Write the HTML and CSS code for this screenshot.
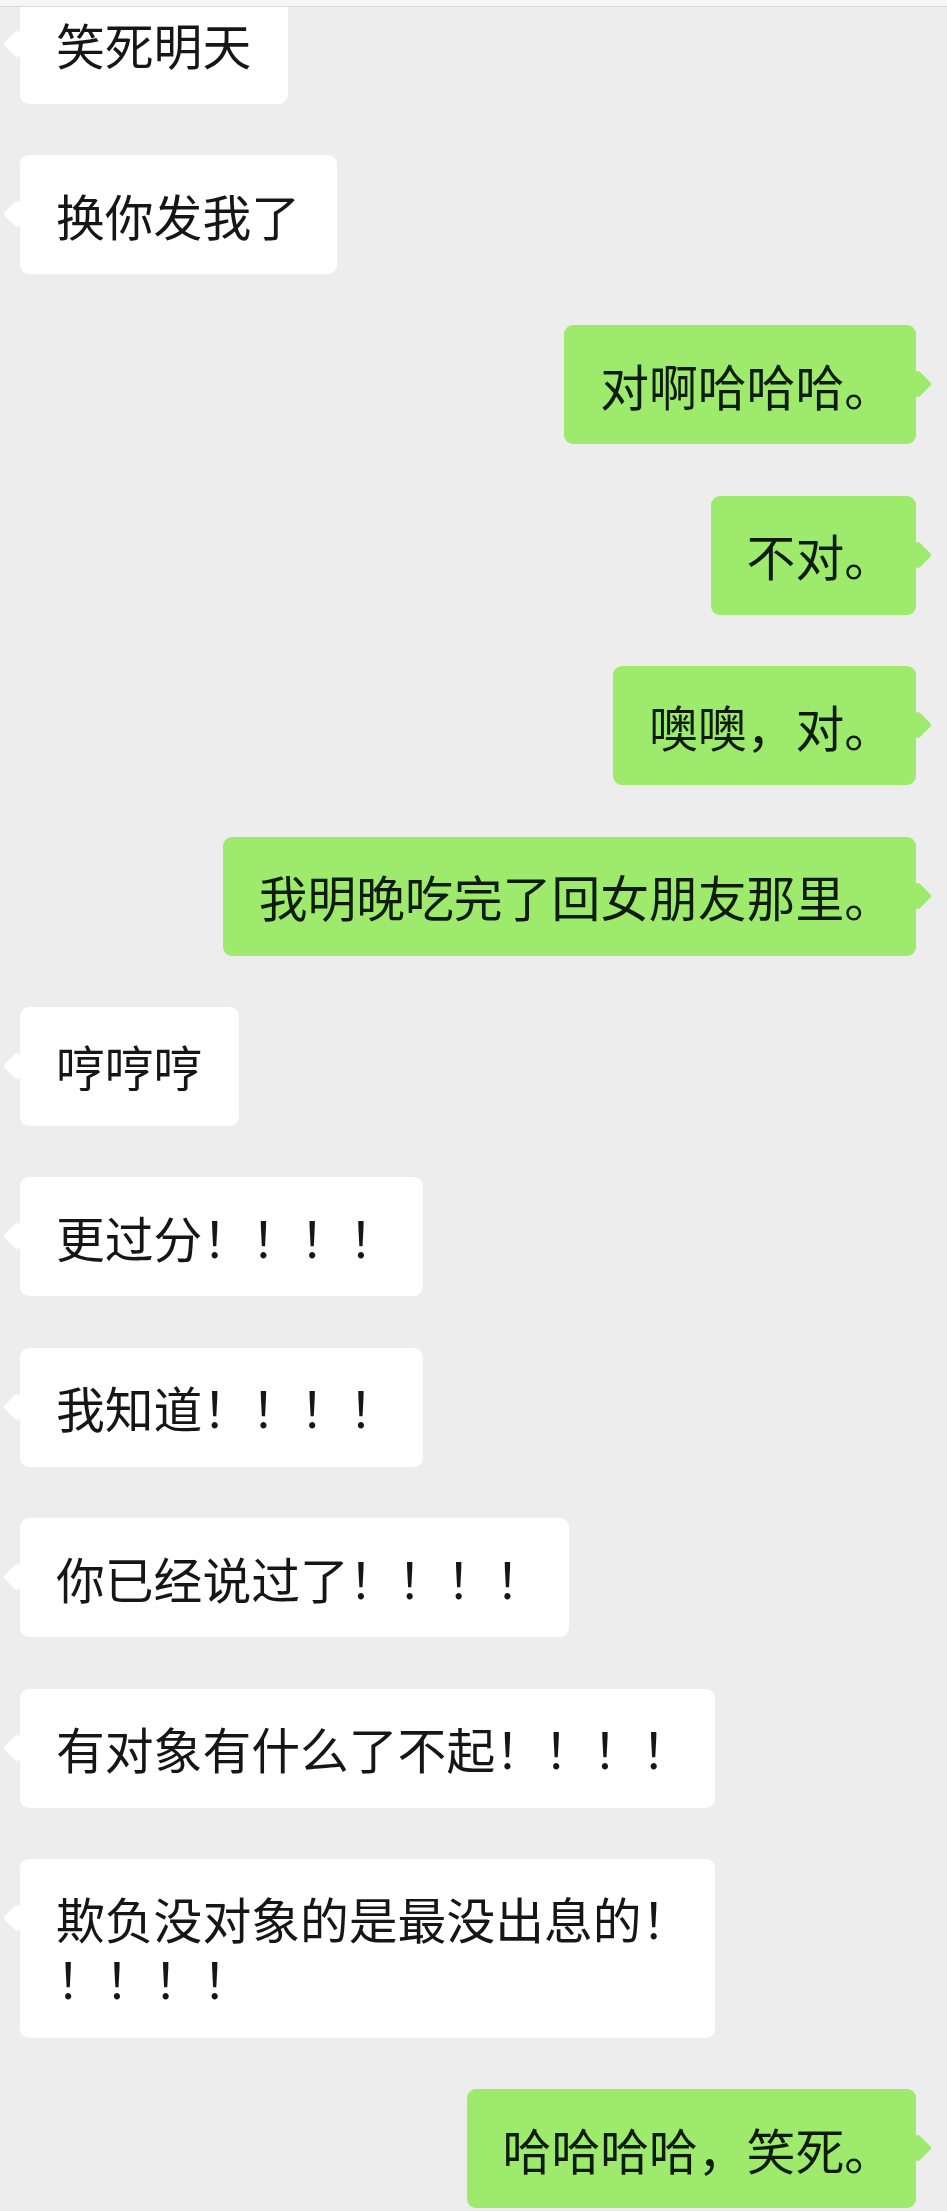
FILE: index.html
```html
<!DOCTYPE html>
<html lang="zh-CN">
<head>
    <meta charset="UTF-8">
    <meta name="viewport" content="width=device-width, initial-scale=1.0">
    <title>聊天记录</title>
    <link rel="stylesheet" href="styles.css">
</head>
<body>
    <div class="topbar"></div>

    <!-- Сообщения чата -->
    <div class="chat">
        <div class="bubble in">笑死明天</div>
        <div class="bubble in">换你发我了</div>
        <div class="bubble out">对啊哈哈哈。</div>
        <div class="bubble out">不对。</div>
        <div class="bubble out">噢噢，对。</div>
        <div class="bubble out">我明晚吃完了回女朋友那里。</div>
        <div class="bubble in">哼哼哼</div>
        <div class="bubble in trim">更过分！！！！</div>
        <div class="bubble in trim">我知道！！！！</div>
        <div class="bubble in trim">你已经说过了！！！！</div>
        <div class="bubble in trim">有对象有什么了不起！！！！</div>
        <div class="bubble in trim">欺负没对象的是最没出息的！<br>！！！！</div>
        <div class="bubble out">哈哈哈哈，笑死。</div>
    </div>
</body>
</html>
```

FILE: styles.css
```css
body {
    font-family: "Noto Sans CJK SC", "Noto Sans", sans-serif;
    background-color: #ededed;
    color: #161616;
    margin: 0;
    padding: 0;
    height: 2211px;
    overflow: hidden;
}

.topbar {
    position: relative;
    z-index: 2;
    height: 6px;
    background-color: #f6f6f6;
    border-bottom: 1px solid #d9d9d9;
}

.chat {
    display: flex;
    flex-direction: column;
    gap: 51.4px;
    margin-top: -22.4px;
    padding: 0 31px 0 20px;
}

.bubble {
    position: relative;
    font-size: 48.8px;
    line-height: 60px;
    padding: 29.5px 37px 29.5px 36px;
    border-radius: 9px;
    white-space: nowrap;
}

/* хвостик пузыря */
.bubble::before {
    content: "";
    position: absolute;
    top: 49px;
    width: 20px;
    height: 20px;
    border-radius: 3px;
    transform: rotate(45deg);
}

.bubble.in {
    align-self: flex-start;
    background-color: #ffffff;
}

.bubble.in::before {
    left: -13px;
    background-color: #ffffff;
}

.bubble.out {
    align-self: flex-end;
    background-color: #9dea6c;
    color: #0f1c0b;
    padding-right: 23px;
}

.bubble.out::before {
    right: -12px;
    background-color: #9dea6c;
}

.bubble.trim {
    padding-right: 25px;
}
```
